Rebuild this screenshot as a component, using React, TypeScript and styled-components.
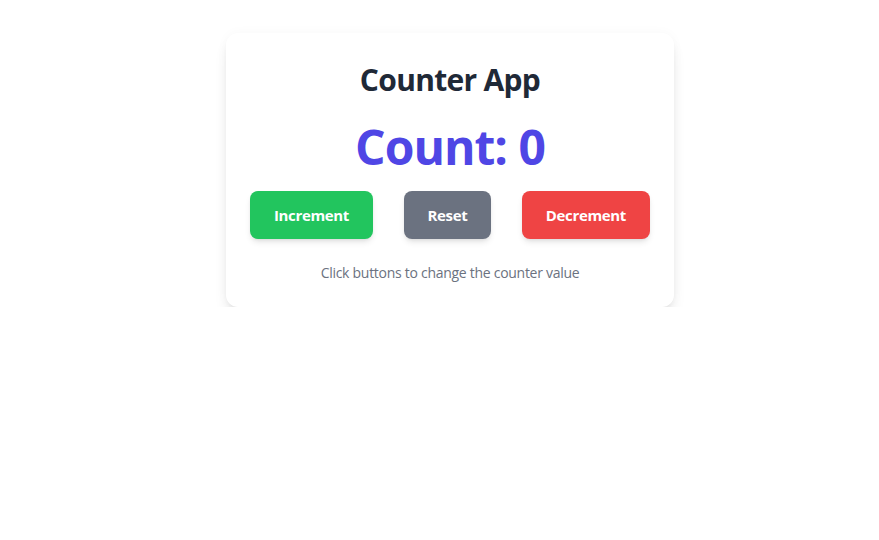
import React, { useState } from "react";
import styled, { createGlobalStyle } from "styled-components";

const Global = createGlobalStyle`
  html, body { margin: 0; padding: 0; background: #ffffff; }
  body { font-family: "Open Sans", "Noto Sans", sans-serif; }
  * { box-sizing: border-box; }
`;

const Page = styled.div`
  display: flex;
  justify-content: center;
  align-items: flex-start;
  padding: 33px 0 0 21px;
`;

const Card = styled.div`
  width: 448px;
  background: #ffffff;
  border-radius: 12px;
  box-shadow: 0 10px 15px -3px rgba(0, 0, 0, 0.1), 0 4px 6px -4px rgba(0, 0, 0, 0.1), 0 0 12px rgba(0, 0, 0, 0.03);
  padding: 29px 24px 24px;
  display: flex;
  flex-direction: column;
  align-items: center;
`;

const Title = styled.h1`
  margin: 0 0 20px;
  font-size: 30px;
  line-height: 36px;
  font-weight: 700;
  letter-spacing: -0.7px;
  color: #1f2937;
`;

const Count = styled.div`
  margin: 0 0 15px;
  font-size: 48px;
  line-height: 1.2;
  font-weight: 700;
  letter-spacing: -1px;
  color: #4f46e5;
`;

const Row = styled.div`
  width: 100%;
  display: flex;
  justify-content: space-between;
  margin-bottom: 24px;
`;

const Button = styled.button<{ $bg: string }>`
  border: none;
  background: ${(p) => p.$bg};
  color: #ffffff;
  font-family: inherit;
  font-size: 15px;
  font-weight: 700;
  line-height: 24px;
  letter-spacing: -0.35px;
  height: 48px;
  padding: 0 24px;
  border-radius: 8px;
  box-shadow: 0 4px 6px -1px rgba(0, 0, 0, 0.1), 0 2px 4px -2px rgba(0, 0, 0, 0.1);
  cursor: pointer;
`;

const Hint = styled.p`
  margin: 0;
  font-size: 14px;
  line-height: 20px;
  letter-spacing: -0.28px;
  color: #6b7280;
`;

export default function App() {
  const [count, setCount] = useState(0);
  return (
    <>
      <Global />
      <Page>
        <Card>
          <Title>Counter App</Title>
          <Count>Count: {count}</Count>
          <Row>
            <Button $bg="#22c55e" onClick={() => setCount(count + 1)}>Increment</Button>
            <Button $bg="#6b7280" onClick={() => setCount(0)}>Reset</Button>
            <Button $bg="#ef4444" onClick={() => setCount(count - 1)}>Decrement</Button>
          </Row>
          <Hint>Click buttons to change the counter value</Hint>
        </Card>
      </Page>
    </>
  );
}
